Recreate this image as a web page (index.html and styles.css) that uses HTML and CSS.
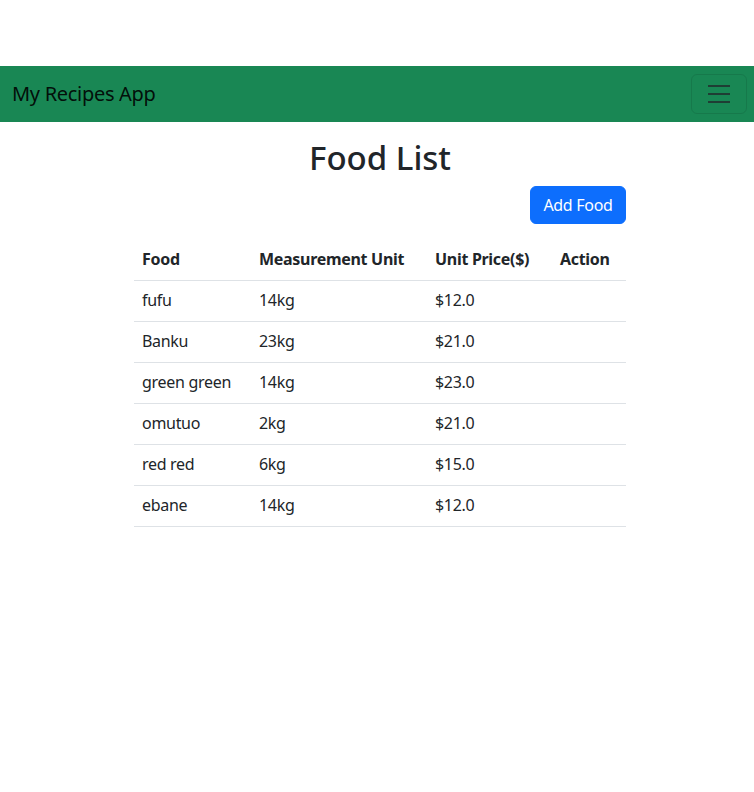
FILE: index.html
```html
<!DOCTYPE html>
<html lang="en">
<head>
<meta charset="utf-8">
<title>My Recipes App</title>
<link rel="stylesheet" href="styles.css">
</head>
<body>
<div class="spacer"></div>
<nav class="navbar">
  <a class="brand" href="#">My Recipes App</a>
  <button class="toggler" type="button" aria-label="Toggle navigation">
    <svg width="30" height="30" viewBox="0 0 30 30"><path d="M4 7h22M4 15h22M4 23h22" stroke="rgba(33,37,41,0.75)" stroke-width="2" stroke-linecap="butt"/></svg>
  </button>
</nav>
<main class="content">
  <h1 class="title">Food List</h1>
  <div class="actions"><button class="btn-primary" type="button">Add Food</button></div>
  <table class="table">
    <thead>
      <tr><th class="c1">Food</th><th class="c2">Measurement Unit</th><th class="c3">Unit Price($)</th><th class="c4">Action</th></tr>
    </thead>
    <tbody>
      <tr><td>fufu</td><td>14kg</td><td>$12.0</td><td></td></tr>
      <tr><td>Banku</td><td>23kg</td><td>$21.0</td><td></td></tr>
      <tr><td>green green</td><td>14kg</td><td>$23.0</td><td></td></tr>
      <tr><td>omutuo</td><td>2kg</td><td>$21.0</td><td></td></tr>
      <tr><td>red red</td><td>6kg</td><td>$15.0</td><td></td></tr>
      <tr><td>ebane</td><td>14kg</td><td>$12.0</td><td></td></tr>
    </tbody>
  </table>
</main>
</body>
</html>
```

FILE: styles.css
```css
* { box-sizing: border-box; }
body {
  margin: 0;
  font-family: "Noto Sans", "Open Sans", sans-serif;
  font-size: 16px;
  line-height: 1.5;
  color: #212529;
  background: #fff;
}
.spacer { height: 66px; }
.navbar {
  height: 56px;
  background: #198754;
  display: flex;
  align-items: center;
  justify-content: space-between;
  padding: 0 7px 0 12px;
}
.brand {
  font-size: 20px;
  letter-spacing: -0.3px;
  color: rgba(0,0,0,0.9);
  text-decoration: none;
  line-height: 30px;
}
.toggler {
  width: 56px;
  height: 40px;
  border: 1px solid rgba(0,0,0,0.1);
  border-radius: 6px;
  background: transparent;
  display: flex;
  align-items: center;
  justify-content: center;
  padding: 0;
}
.content {
  width: 492px;
  margin-left: 134px;
}
.title {
  margin: 16px 0 8px;
  text-align: center;
  font-size: 33px;
  font-weight: 500;
  line-height: 1.2;
}
.actions {
  display: flex;
  justify-content: flex-end;
}
.btn-primary {
  font-family: inherit;
  font-size: 16px;
  line-height: 24px;
  letter-spacing: -0.3px;
  white-space: nowrap;
  color: #fff;
  background: #0d6efd;
  border: 1px solid #0d6efd;
  border-radius: 6px;
  padding: 0;
  height: 38px;
  width: 96px;
  text-align: center;
}
.table {
  width: 100%;
  margin-top: 16px;
  border-collapse: collapse;
  letter-spacing: -0.3px;
}
.table th, .table td {
  padding: 7px 8px 9px;
  text-align: left;
  border-bottom: 1px solid #dee2e6;
  height: 41px;
  vertical-align: middle;
}
.table th { font-weight: 700; }
.c1 { width: 117px; }
.c2 { width: 176px; }
.c3 { width: 125px; }
.c4 { width: 74px; }
```
